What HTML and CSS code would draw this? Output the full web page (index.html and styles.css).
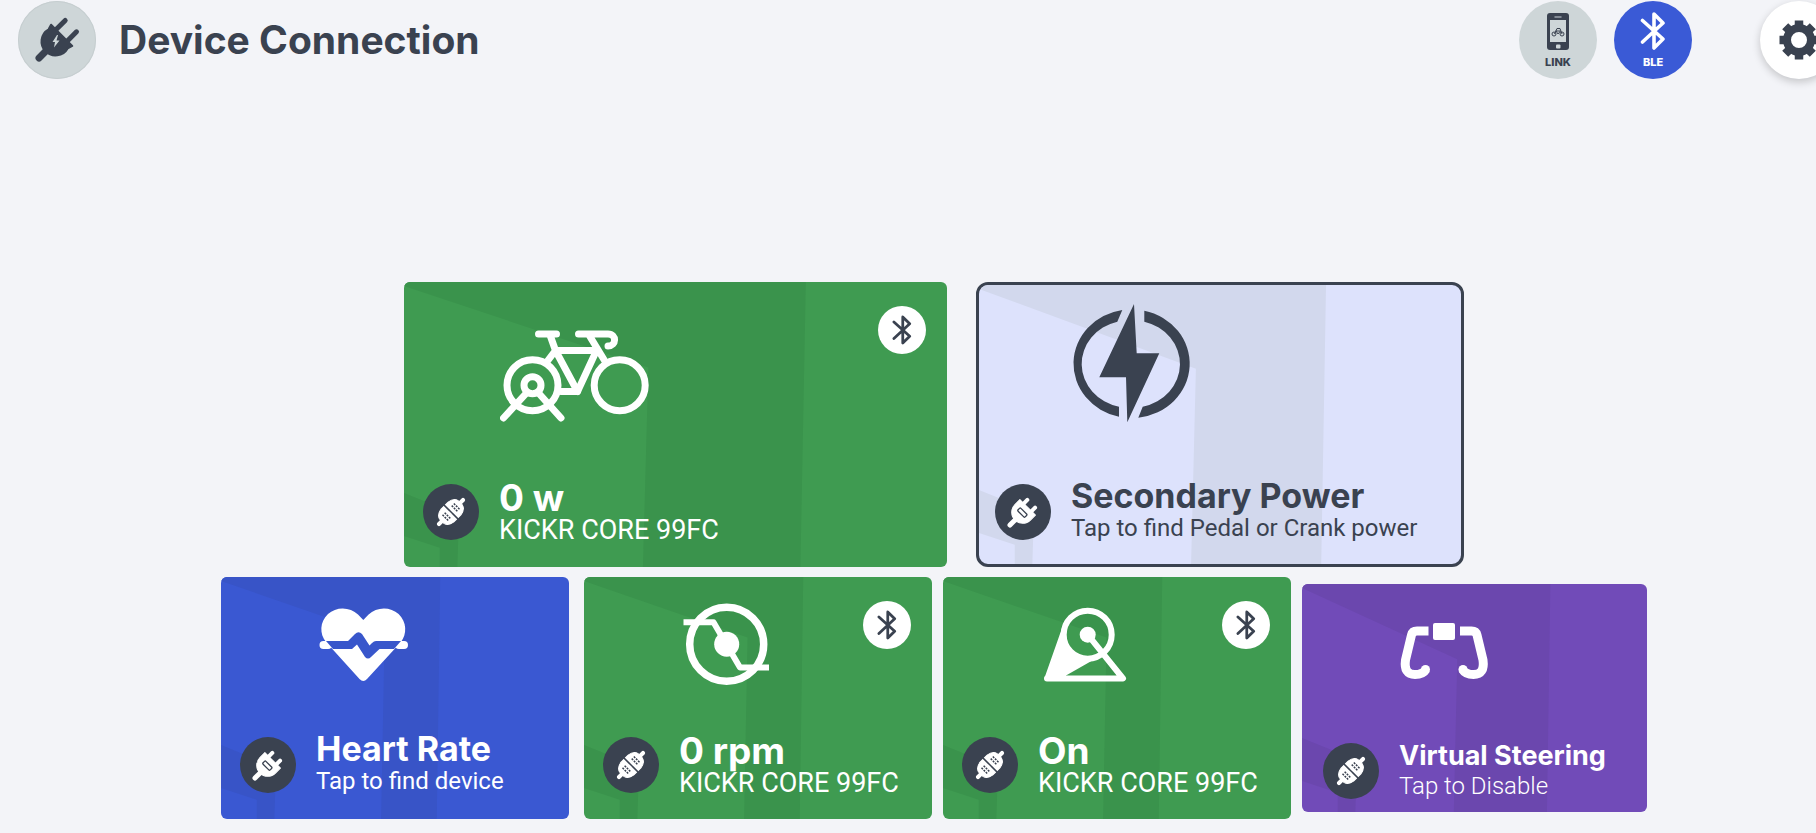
FILE: index.html
```
<!DOCTYPE html>
<html lang="en">
<head>
    <meta charset="UTF-8">
    <meta name="viewport" content="width=device-width, initial-scale=1.0">
    <title>Device Connection</title>
    <link rel="stylesheet" href="styles.css">
</head>
<body>
    <!-- Shared icons -->
    <svg class="sprite" aria-hidden="true">
        <symbol id="bluetooth" viewBox="0 0 26 38">
            <path d="M2.5 8.5 L23 27 L14 36 V2 L23 11 L2.5 30" fill="none" stroke="currentColor" stroke-width="3.6" stroke-linejoin="round" stroke-linecap="round"/>
        </symbol>
        <symbol id="unplugged" viewBox="0 0 56 56">
            <g transform="translate(27 29) rotate(45)">
                <path d="M-5.500 -5 V-13 M5.500 -5 V-13" stroke="#fff" stroke-width="4" stroke-linecap="round"/>
                <path d="M0 8 V17" stroke="#fff" stroke-width="5" stroke-linecap="round"/>
                <path d="M-11 -8 H11 V-1 A11 11 0 0 1 -11 -1 Z" fill="#fff" stroke="#fff" stroke-linejoin="round"/>
                <rect x="-5" y="-2.500" width="10" height="4" rx="1" fill="none" stroke="#3a4250" stroke-width="1.300"/>
            </g>
        </symbol>
        <symbol id="plugged" viewBox="0 0 56 56">
            <g transform="translate(28 28) rotate(45)">
                <path d="M0 -17 V17" stroke="#fff" stroke-width="4" stroke-linecap="round"/>
                <path d="M-9 -1 V-5 Q-8 -12 -3 -13 H3 Q8 -12 9 -5 V-1 Z M-9 1 V5 Q-8 12 -3 13 H3 Q8 12 9 5 V1 Z" fill="#fff" stroke="#fff" stroke-linejoin="round"/>
                <path d="M-10 0 H10" stroke="#3a4250" stroke-width="1.500"/>
                <path d="M-4 -8 H4 M-4 -5 H4 M-4 5 H4 M-4 8 H4" stroke="#3a4250" stroke-width="1.500" stroke-dasharray="2 1"/>
            </g>
        </symbol>
    </svg>

    <header class="topbar">
        <span class="round-icon">
            <svg width="78" height="78" viewBox="0 0 78 78">
                <g transform="translate(38 40) rotate(45)">
                    <path d="M-8 -6 V-21 M8 -6 V-21" stroke="#3a4250" stroke-width="5" stroke-linecap="round"/>
                    <path d="M0 10 V24" stroke="#3a4250" stroke-width="7" stroke-linecap="round"/>
                    <path d="M-15 -8 H15 L13.500 -3 A14 14 0 1 1 -13.500 -3 Z" fill="#3a4250" stroke="#3a4250" stroke-width="2" stroke-linejoin="round"/>
                </g>
                <path d="M39 34 L34.500 41 H37 L36 46.500 L41.500 39.500 H38.500 L40 34 Z" fill="#ced6d8"/>
            </svg>
        </span>
        <h1>Device Connection</h1>
        <nav class="tools">
            <button class="tool link" type="button">
                <svg width="22" height="37" viewBox="0 0 22 37">
                    <rect width="22" height="37" rx="3" fill="#3a4250"/>
                    <rect x="3" y="7" width="16" height="22" fill="#ced6d8"/>
                    <path d="M8 4 H14" stroke="#9aa3aa" stroke-width="1.500" stroke-linecap="round"/>
                    <rect x="9" y="31.500" width="4.500" height="4" rx="1" fill="#ced6d8"/>
                    <path d="M10 15.500 H13 L15 21 M10 15.500 L7.500 21 M8.500 18 H13.500 L11 21 L9 18" fill="none" stroke="#3a4250"/>
                    <circle cx="7" cy="21" r="2" fill="none" stroke="#3a4250"/>
                    <circle cx="15" cy="21" r="2" fill="none" stroke="#3a4250"/>
                </svg>
                LINK
            </button>
            <button class="tool ble" type="button">
                <svg width="26" height="38"><use href="#bluetooth"/></svg>
                BLE
            </button>
            <button class="tool settings" type="button" aria-label="Settings">
                <svg width="40" height="40" viewBox="-20 -20 40 40" stroke="#3a4250" fill="none">
                    <circle r="12" stroke-width="8"/>
                    <path d="M0 -19.500 V-14 M0 14 V19.500 M-19.500 0 H-14 M14 0 H19.500" stroke-width="8.500"/>
                    <path d="M0 -19.500 V-14 M0 14 V19.500 M-19.500 0 H-14 M14 0 H19.500" stroke-width="8.500" transform="rotate(45)"/>
                </svg>
            </button>
        </nav>
    </header>

    <main class="devices">
        <div class="row primary">
            <button class="card large green power" type="button">
                <svg class="icon" viewBox="0 0 150 120" fill="none" stroke="#fff" stroke-width="7" stroke-linecap="round" stroke-linejoin="round">
                    <circle cx="32.5" cy="81.3" r="25.500"/>
                    <circle cx="119.7" cy="81.3" r="25.500"/>
                    <circle cx="32.5" cy="81.3" r="8.500"/>
                    <path d="M26.500 89 L3.500 114 M38.500 89 L61 114"/>
                    <path d="M38.500 30 H56.500 M50 31 L55.500 46.500 L77.500 87.500 H61 M55.500 46.500 L47.500 57"/>
                    <path d="M57 46.500 H96.500 L77.500 87.500"/>
                    <path d="M78.500 30 H108 C117 30 116.500 42 108 42 M89 31 L104.500 56.500"/>
                </svg>
                <span class="badge"><svg width="20" height="30"><use href="#bluetooth"/></svg></span>
                <span class="footer">
                    <svg class="plug"><use href="#plugged"/></svg>
                    <span class="info reading"><strong>0 w</strong><span>KICKR CORE 99FC</span></span>
                </span>
            </button>
            <button class="card large lavender second-power" type="button">
                <svg class="icon" viewBox="0 0 150 120" fill="#3a4250">
                    <path d="M50.300 6 A57.800 54.300 0 0 0 47 112.700 V102.700 A47.500 43.700 0 0 1 45.300 17.700 Z"/>
                    <path d="M72.300 6.700 A57.800 54.300 0 0 1 66.300 113.700 L70.700 102.700 A47.500 43.700 0 0 0 72.300 17.700 Z"/>
                    <path d="M62 0 L64.700 49.300 H87.300 L55.300 118.300 L54 73.300 H27.300 Z"/>
                </svg>
                <span class="footer">
                    <svg class="plug"><use href="#unplugged"/></svg>
                    <span class="info"><strong>Secondary Power</strong><span>Tap to find Pedal or Crank power</span></span>
                </span>
            </button>
        </div>

        <div class="row">
            <button class="card blue" type="button">
                <svg class="icon" viewBox="0 0 92 84" fill="#fff">
                    <path d="M46.300 19 L41 13.500 C33 5.500 19 5.500 11 13 C2.500 21 2.500 33 9 41 L42.500 78 Q46.300 82 50 78 L84 41 C90 33 90 21 81.600 13 C73.600 5.500 59.600 5.500 51.600 13.500 Z"/>
                    <path d="M6.500 44 H11 M82 44 H87" stroke="#fff" stroke-width="8" stroke-linecap="round"/>
                    <path d="M9 40 L16 48 H35 L40 43.500 L48 56 Q51 59 54 56 L62.500 48 H77 L84 40 H59 Q57 40 55 42 L52.500 44.500 L45 33 Q41.500 29.500 38 33 L31 40 Z" fill="#3856cb"/>
                </svg>
                <span class="footer">
                    <svg class="plug"><use href="#unplugged"/></svg>
                    <span class="info"><strong>Heart Rate</strong><span>Tap to find device</span></span>
                </span>
            </button>
            <button class="card green cadence" type="button">
                <svg class="icon" viewBox="0 0 92 84" fill="none" stroke="#fff" stroke-width="6" stroke-linejoin="round">
                    <circle cx="46.700" cy="43.200" r="37" stroke-width="7.500"/>
                    <circle cx="46.700" cy="43.200" r="12.500" fill="#fff" stroke="none"/>
                    <path d="M3.500 21.300 H33.500 L60 66.500 H89"/>
                </svg>
                <span class="badge"><svg width="20" height="30"><use href="#bluetooth"/></svg></span>
                <span class="footer">
                    <svg class="plug"><use href="#plugged"/></svg>
                    <span class="info reading"><strong>0 rpm</strong><span>KICKR CORE 99FC</span></span>
                </span>
            </button>
            <button class="card green" type="button">
                <svg class="icon" viewBox="0 0 92 84" fill="none" stroke="#fff" stroke-width="6" stroke-linejoin="round" stroke-linecap="round">
                    <circle cx="48.700" cy="33.700" r="24"/>
                    <circle cx="48.700" cy="33.700" r="8" fill="#fff" stroke="none"/>
                    <path d="M48.700 33.700 L84 77.500 H8"/>
                    <path d="M5.800 76 L25.500 20 L25 36 A24 24 0 0 0 63 54 L27 74.500 V79 L8 80 Q5 79 5.800 76 Z" fill="#fff" stroke="none"/>
                </svg>
                <span class="badge"><svg width="20" height="30"><use href="#bluetooth"/></svg></span>
                <span class="footer">
                    <svg class="plug"><use href="#plugged"/></svg>
                    <span class="info reading"><strong>On</strong><span>KICKR CORE 99FC</span></span>
                </span>
            </button>
            <button class="card purple" type="button">
                <svg class="icon" viewBox="0 0 92 84" fill="none" stroke="#fff" stroke-width="9">
                    <rect x="35" y="15" width="22" height="17" rx="2" fill="#fff" stroke="none"/>
                    <path d="M30.500 23 H19 Q14.500 23 13.500 27 L7.500 52 Q5.500 66.500 17 66.500 Q25 66.500 28 61.500"/>
                    <circle cx="27.500" cy="61.500" r="4.500" fill="#fff" stroke="none"/>
                    <path d="M62 23 H73.500 Q78 23 79 27 L85 52 Q87 66.500 75.500 66.500 Q67.500 66.500 64.500 61.500"/>
                    <circle cx="65" cy="61.500" r="4.500" fill="#fff" stroke="none"/>
                </svg>
                <span class="footer">
                    <svg class="plug"><use href="#plugged"/></svg>
                    <span class="info"><strong>Virtual Steering</strong><span>Tap to Disable</span></span>
                </span>
            </button>
        </div>
    </main>
</body>
</html>
```
FILE: styles.css
```
* {
    box-sizing: border-box;
}

body {
    margin: 0;
    background-color: #f3f4f8;
    color: #3a4250;
    font-family: Roboto, "Liberation Sans", sans-serif;
    overflow-x: hidden;
}

button {
    padding: 0;
    border: none;
    color: inherit;
    font-family: inherit;
    cursor: pointer;
}

svg {
    display: block;
}

.sprite {
    position: absolute;
    width: 0;
    height: 0;
}

/* Top bar, runs a little past the right edge */
.topbar {
    display: flex;
    align-items: center;
    margin-right: -22px;
    padding: 1px 0 1px 18px;
}

h1 {
    margin: 0 0 0 23px;
    font-family: Inter, sans-serif;
    font-size: 39px;
    line-height: 48px;
}

.round-icon,
.tool {
    flex: none;
    width: 78px;
    height: 78px;
    border-radius: 50%;
}

.round-icon {
    background-color: #ced6d8;
    box-shadow: inset 0 0 0 1px #c6ced0;
}

.tools {
    display: flex;
    gap: 17px;
    margin-left: auto;
}

.tool {
    display: flex;
    flex-direction: column;
    align-items: center;
    justify-content: center;
    gap: 6px;
    font-family: Inter, sans-serif;
    font-size: 11px;
    font-weight: 800;
    line-height: 12px;
}

.link {
    background-color: #ced6d8;
}

.ble {
    background-color: #3a5ad6;
    color: white;
}

.settings {
    margin-left: 51px;
    background-color: white;
    box-shadow: 0 3px 8px rgba(0, 0, 0, 0.2);
}

/* Device cards */
.devices {
    display: flex;
    flex-direction: column;
    gap: 10px;
    padding: 202px 0 14px 52px;
}

.row {
    display: flex;
    align-items: center;
    justify-content: center;
    gap: 11px;
}

.primary {
    gap: 29px;
}

.card {
    --edge: 63%;
    --inner: 47%;
    --corner: 25%;
    position: relative;
    display: flex;
    flex-direction: column;
    justify-content: space-between;
    flex: 0 1 348px;
    min-height: 242px;
    padding: 24px 19px 26px;
    border-radius: 6px;
    overflow: hidden;
    isolation: isolate;
    background-color: var(--base);
    color: white;
    text-align: left;
}

.large {
    --edge: 74%;
    --inner: 45%;
    --corner: 30%;
    flex-basis: 543px;
    min-height: 285px;
    padding: 22px 19px 27px;
}

/* Darker angled shapes behind the content */
.card::before,
.card::after {
    content: "";
    position: absolute;
    z-index: -1;
    background-color: var(--shade);
}

.card::before {
    inset: 0;
    clip-path: polygon(0 0, var(--edge) 0, calc(var(--edge) - 1%) 100%, calc(var(--inner) - 1%) 100%, var(--inner) var(--corner), 0 4px);
}

.card::after {
    left: 0;
    bottom: 0;
    width: 55px;
    height: 74px;
    clip-path: polygon(0 0, 100% 30%, 97% 100%, 65% 100%, 65% 74%, 0 58%);
}

.green {
    --base: #3f9b51;
    --shade: #3a934c;
}

.blue {
    --base: #3a58d2;
    --shade: #3854c7;
}

.purple {
    --base: #714bb8;
    --shade: #6b47ae;
    --edge: 72%;
    --inner: 45%;
    --corner: 33%;
    flex-basis: 345px;
    min-height: 228px;
    padding: 24px 21px 13px;
}

.lavender {
    --base: #dde2fc;
    --shade: #d2d8ed;
    --edge: 72%;
    flex-basis: 488px;
    padding: 19px 16px 24px;
    border: 3px solid #3a4250;
    border-radius: 12px;
    color: #3a4250;
}

.cadence {
    margin-left: 4px;
}

.icon {
    width: 92px;
    height: 84px;
    margin-left: 77px;
}

.large .icon {
    width: 150px;
    height: 120px;
}

.purple .icon {
    margin-left: 75px;
}

.badge {
    position: absolute;
    top: 24px;
    right: 21px;
    display: flex;
    align-items: center;
    justify-content: center;
    width: 48px;
    height: 48px;
    border-radius: 50%;
    background-color: white;
    color: #3a4250;
}

.footer {
    display: flex;
    align-items: center;
    gap: 20px;
    height: 56px;
}

.plug {
    flex: none;
    width: 56px;
    height: 56px;
    border-radius: 50%;
    background-color: #3a4250;
}

.info {
    display: flex;
    flex-direction: column;
    font-size: 24px;
    line-height: 32px;
    white-space: nowrap;
}

.info strong {
    font-family: Inter, sans-serif;
    font-size: 34px;
    font-weight: 700;
}

.reading {
    padding-top: 4px;
    font-size: 27px;
}

.reading strong {
    font-size: 37px;
}

.purple .info {
    font-weight: 300;
    line-height: 30px;
}

.purple strong {
    font-size: 27px;
}
```
